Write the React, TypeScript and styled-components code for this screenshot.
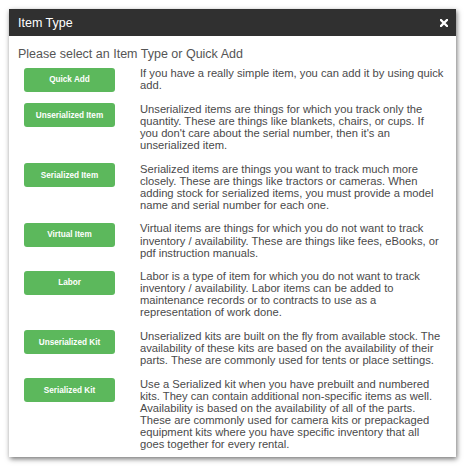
import React from "react";
import styled, { createGlobalStyle } from "styled-components";

const Global = createGlobalStyle`
  html, body { margin: 0; padding: 0; background: #ffffff; }
  body { font-family: "Liberation Sans", Arial, sans-serif; }
`;

const Page = styled.div`
  padding: 9px 11px 11px 9px;
`;

const Dialog = styled.div`
  width: 447px;
  background: #ffffff;
  box-shadow: 1px 2px 5px rgba(0, 0, 0, 0.55);
`;

const Header = styled.div`
  height: 27px;
  background: #303030;
  display: flex;
  align-items: center;
  justify-content: space-between;
  padding: 0 8px 0 9px;
  box-sizing: border-box;
`;

const Title = styled.div`
  color: #ffffff;
  font-size: 12.5px;
`;

const Close = styled.button`
  background: none;
  border: 0;
  padding: 0;
  width: 8px;
  height: 8px;
  display: flex;
  cursor: pointer;
`;

const Body = styled.div`
  padding: 11px 6px 7px 9px;
`;

const Heading = styled.div`
  font-size: 12.5px;
  color: #555555;
  margin-bottom: 6px;
`;

const Row = styled.div`
  display: flex;
  align-items: flex-start;
  padding-left: 6px;
  margin-bottom: 11.4px;
  &:last-child { margin-bottom: 0; }
`;

const TypeButton = styled.button`
  flex: 0 0 91px;
  height: 24px;
  margin-right: 25px;
  margin-top: 0.5px;
  background: #5cb85c;
  border: 0;
  border-radius: 3px;
  color: #ffffff;
  font-family: "Liberation Sans", Arial, sans-serif;
  font-weight: bold;
  font-size: 8.2px;
  padding: 0;
  cursor: pointer;
`;

const Desc = styled.div`
  flex: 1;
  font-size: 11.2px;
  line-height: 12.1px;
  color: #4a4a4a;
`;

const Line = styled.span`
  display: block;
  white-space: nowrap;
`;

const items: { label: string; lines: string[] }[] = [
  {
    label: "Quick Add",
    lines: ["If you have a really simple item, you can add it by using quick", "add."],
  },
  {
    label: "Unserialized Item",
    lines: [
      "Unserialized items are things for which you track only the",
      "quantity. These are things like blankets, chairs, or cups. If",
      "you don't care about the serial number, then it's an",
      "unserialized item.",
    ],
  },
  {
    label: "Serialized Item",
    lines: [
      "Serialized items are things you want to track much more",
      "closely. These are things like tractors or cameras. When",
      "adding stock for serialized items, you must provide a model",
      "name and serial number for each one.",
    ],
  },
  {
    label: "Virtual Item",
    lines: [
      "Virtual items are things for which you do not want to track",
      "inventory / availability. These are things like fees, eBooks, or",
      "pdf instruction manuals.",
    ],
  },
  {
    label: "Labor",
    lines: [
      "Labor is a type of item for which you do not want to track",
      "inventory / availability. Labor items can be added to",
      "maintenance records or to contracts to use as a",
      "representation of work done.",
    ],
  },
  {
    label: "Unserialized Kit",
    lines: [
      "Unserialized kits are built on the fly from available stock. The",
      "availability of these kits are based on the availability of their",
      "parts. These are commonly used for tents or place settings.",
    ],
  },
  {
    label: "Serialized Kit",
    lines: [
      "Use a Serialized kit when you have prebuilt and numbered",
      "kits. They can contain additional non-specific items as well.",
      "Availability is based on the availability of all of the parts.",
      "These are commonly used for camera kits or prepackaged",
      "equipment kits where you have specific inventory that all",
      "goes together for every rental.",
    ],
  },
];

export default function App() {
  return (
    <Page>
      <Global />
      <Dialog>
        <Header>
          <Title>Item Type</Title>
          <Close aria-label="Close">
            <svg width="8" height="8" viewBox="0 0 8 8">
              <path d="M1 1 L7 7 M7 1 L1 7" stroke="#ffffff" strokeWidth="2.3" strokeLinecap="square" />
            </svg>
          </Close>
        </Header>
        <Body>
          <Heading>Please select an Item Type or Quick Add</Heading>
          {items.map((it) => (
            <Row key={it.label}>
              <TypeButton>{it.label}</TypeButton>
              <Desc>
                {it.lines.map((l) => (
                  <Line key={l}>{l}</Line>
                ))}
              </Desc>
            </Row>
          ))}
        </Body>
      </Dialog>
    </Page>
  );
}
